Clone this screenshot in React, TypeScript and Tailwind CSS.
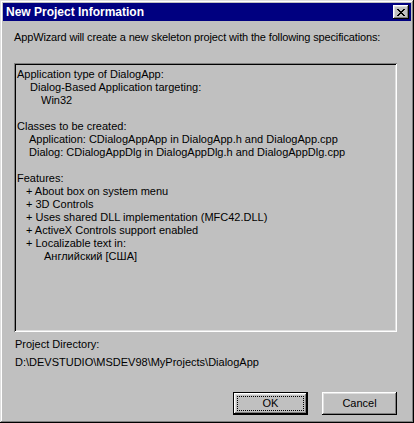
import React from "react";

const raised =
  "shadow-[inset_-1px_-1px_#000,inset_1px_1px_#fff,inset_-2px_-2px_#808080,inset_2px_2px_#dfdfdf]";

const lines: { text: string; indent: string }[] = [
  { text: "Application type of DialogApp:", indent: "pl-0" },
  { text: "Dialog-Based Application targeting:", indent: "pl-[13px]" },
  { text: "Win32", indent: "pl-[24px]" },
  { text: "", indent: "pl-0" },
  { text: "Classes to be created:", indent: "pl-0" },
  { text: "Application: CDialogAppApp in DialogApp.h and DialogApp.cpp", indent: "pl-[12px]" },
  { text: "Dialog: CDialogAppDlg in DialogAppDlg.h and DialogAppDlg.cpp", indent: "pl-[12px]" },
  { text: "", indent: "pl-0" },
  { text: "Features:", indent: "pl-0" },
  { text: "+ About box on system menu", indent: "pl-[9px]" },
  { text: "+ 3D Controls", indent: "pl-[9px]" },
  { text: "+ Uses shared DLL implementation (MFC42.DLL)", indent: "pl-[9px]" },
  { text: "+ ActiveX Controls support enabled", indent: "pl-[9px]" },
  { text: "+ Localizable text in:", indent: "pl-[9px]" },
  { text: "Английский [США]", indent: "pl-[27px]" },
];

function CloseGlyph() {
  return (
    <svg width="8" height="7" viewBox="0 0 8 7" shapeRendering="crispEdges">
      <path
        fill="#000"
        d="M0 0h2v1h-2zM6 0h2v1h-2zM1 1h2v1h-2zM5 1h2v1h-2zM2 2h4v1h-4zM3 3h2v1h-2zM2 4h4v1h-4zM1 5h2v1h-2zM5 5h2v1h-2zM0 6h2v1h-2zM6 6h2v1h-2z"
      />
    </svg>
  );
}

export default function App() {
  return (
    <div
      className="w-[414px] h-[423px] bg-[#c0c0c0] p-[3px] flex flex-col text-[11px] leading-[13px] text-black shadow-[inset_-1px_-1px_#000,inset_1px_1px_#dfdfdf,inset_-2px_-2px_#808080,inset_2px_2px_#fff]"
      style={{ fontFamily: '"Liberation Sans", Arial, sans-serif' }}
    >
      {/* title bar */}
      <div className="h-[18px] bg-[#000080] flex items-center justify-between pl-[3px] pr-[2px]">
        <span className="text-white font-bold text-[12px] leading-[18px]">New Project Information</span>
        <button className={`w-[16px] h-[14px] bg-[#c0c0c0] flex items-center justify-center ${raised}`}>
          <CloseGlyph />
        </button>
      </div>

      <div className="flex-1 flex flex-col pl-[11px] pt-[10px]">
        <p className="tracking-[-0.14px]">
          AppWizard will create a new skeleton project with the following specifications:
        </p>

        {/* sunken info box */}
        <div className="mt-[19px] w-[383px] h-[269px] p-[2px] pt-[5px] pl-[3px] shadow-[inset_1px_1px_#808080,inset_-1px_-1px_#fff,inset_2px_2px_#000,inset_-2px_-2px_#dfdfdf]">
          {lines.map((l, i) => (
            <div key={i} className={`h-[13px] whitespace-nowrap ${l.indent}`}>
              {l.text}
            </div>
          ))}
        </div>

        <p className="mt-[6px] pl-px">Project Directory:</p>
        <p className="mt-[5px] pl-px">D:\DEVSTUDIO\MSDEV98\MyProjects\DialogApp</p>

        <div className="mt-[23px] w-[383px] flex justify-end gap-[14px]">
          <button className="w-[75px] h-[23px] border border-black bg-[#c0c0c0] p-[3px] shadow-[inset_-1px_-1px_#000,inset_1px_1px_#fff,inset_-2px_-2px_#808080,inset_2px_2px_#dfdfdf]">
            <div className="w-full h-full border border-dotted border-black flex items-center justify-center">
              OK
            </div>
          </button>
          <button className={`w-[75px] h-[23px] bg-[#c0c0c0] flex items-center justify-center ${raised}`}>
            Cancel
          </button>
        </div>
      </div>
    </div>
  );
}
